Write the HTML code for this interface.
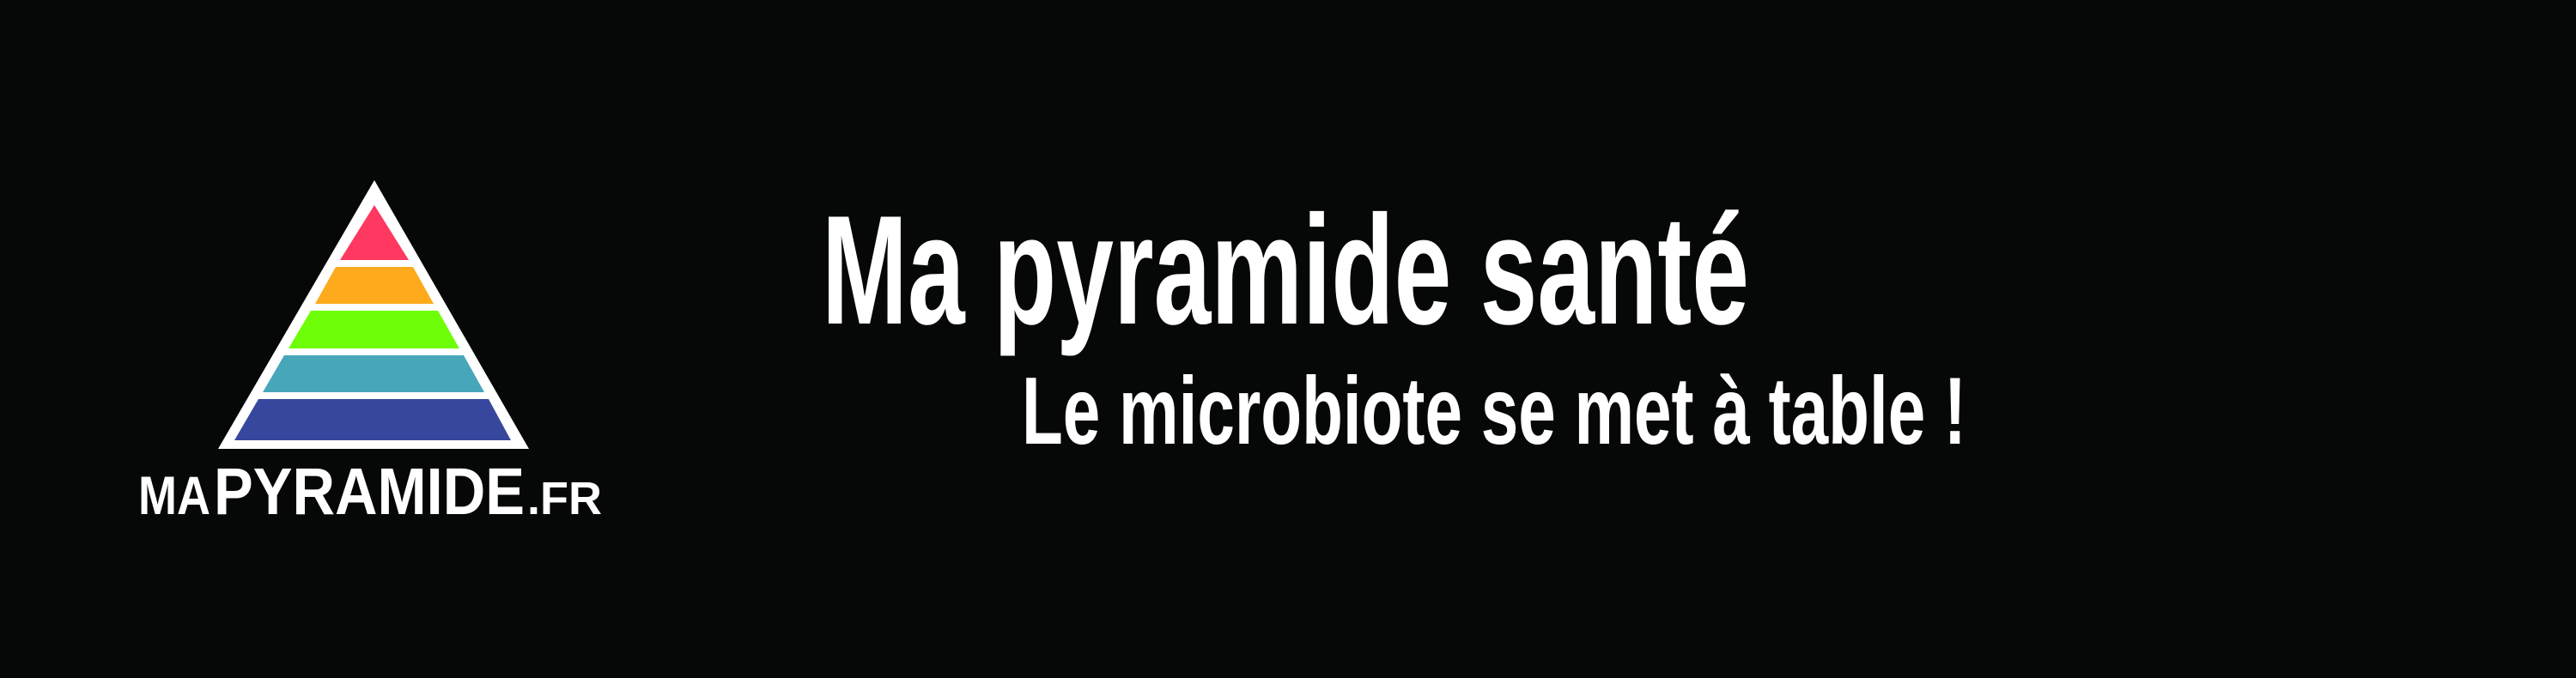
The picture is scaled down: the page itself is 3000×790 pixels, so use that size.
<!DOCTYPE html>
<html><head><meta charset="utf-8"><style>
html,body{margin:0;padding:0;background:#060807;}
svg{display:block;}
</style></head><body>
<svg width="3000" height="790" viewBox="0 0 3000 790" xmlns="http://www.w3.org/2000/svg">
<rect width="3000" height="790" fill="#060807"/>
<polygon points="436,210 616,523 254,523" fill="#ffffff"/>
<polygon points="436,239 476,303 396,303" fill="#fe3860"/>
<polygon points="391,311 481,311 505,354 367,354" fill="#fdab1c"/>
<polygon points="362,362 510,362 535,406 336,406" fill="#6efe07"/>
<polygon points="331,414 540,414 564,457 306,457" fill="#47a6ba"/>
<polygon points="301,465 569,465 595,513 273,513" fill="#37479d"/>
<g fill="#fff" font-family="Liberation Sans, sans-serif" font-weight="bold">
<text x="161" y="599" font-size="63" textLength="84" lengthAdjust="spacingAndGlyphs">MA</text>
<text x="249" y="599" font-size="77" textLength="362" lengthAdjust="spacingAndGlyphs">PYRAMIDE</text>
<text x="614" y="599" font-size="54" textLength="87" lengthAdjust="spacingAndGlyphs">.FR</text>
</g>
<g fill="#fff" font-family="Liberation Sans, sans-serif" font-weight="bold">
<text x="957" y="377" font-size="181" textLength="1080" lengthAdjust="spacingAndGlyphs">Ma pyramide santé</text>
<text x="1190" y="517" font-size="111" textLength="1100" lengthAdjust="spacingAndGlyphs">Le microbiote se met à table !</text>
</g>
</svg>
</body></html>
